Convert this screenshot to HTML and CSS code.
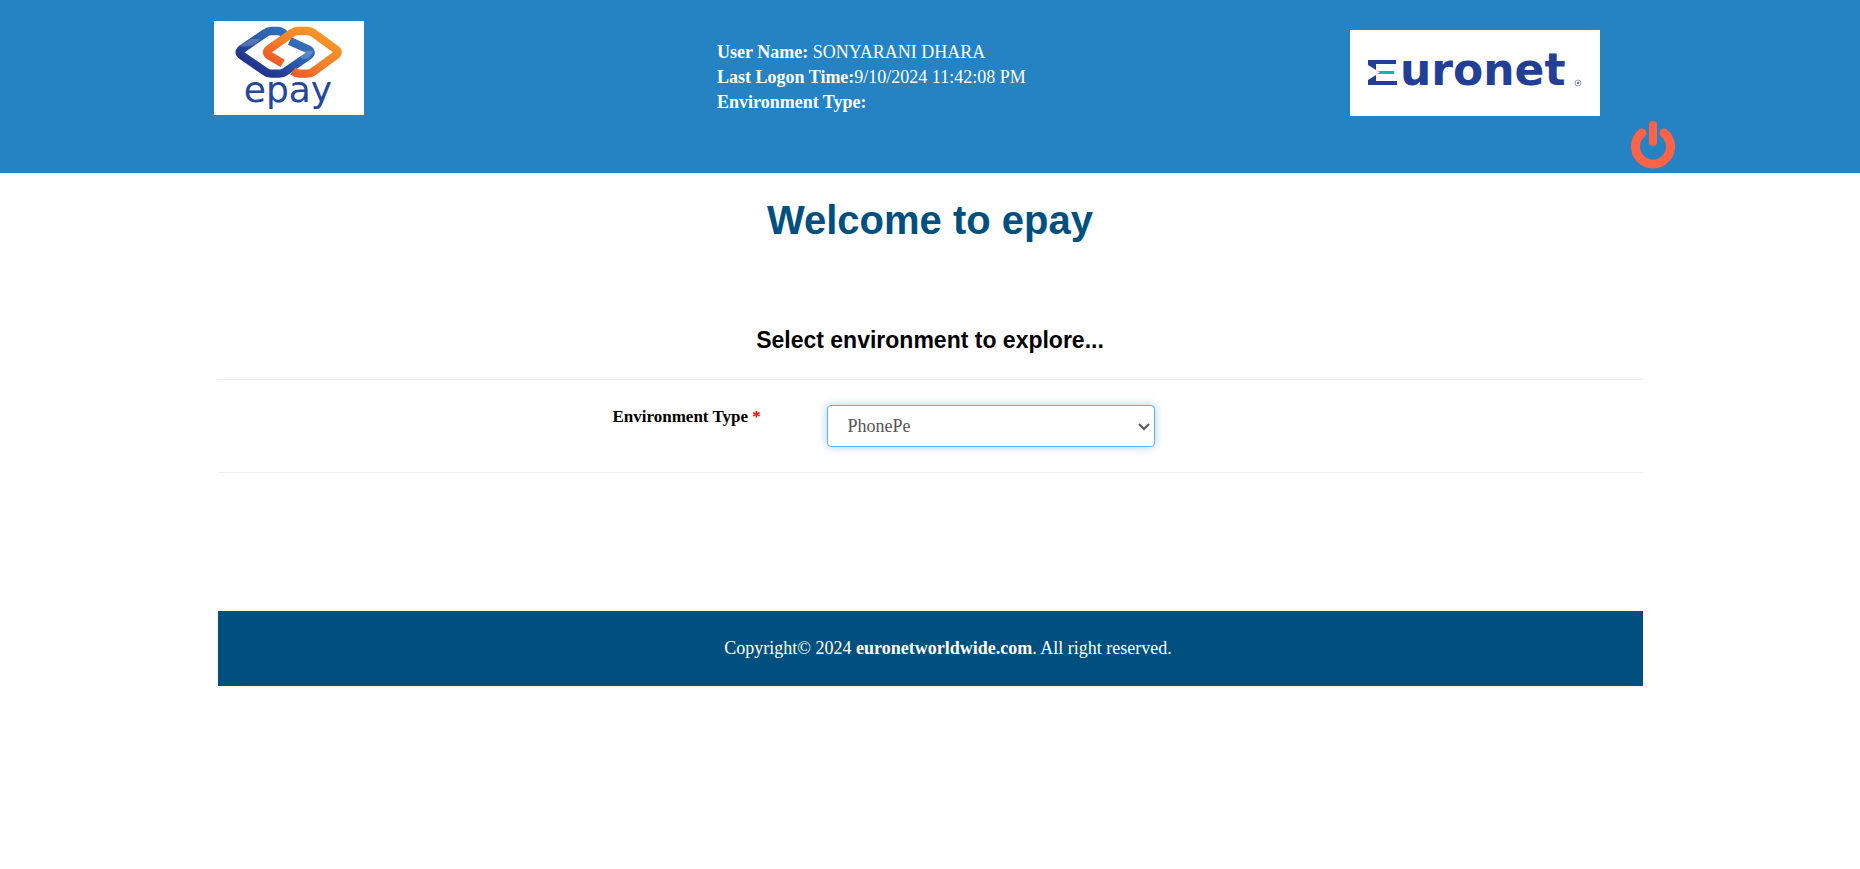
FILE: index.html
```html
<!DOCTYPE html>
<html lang="en">
<head>
<meta charset="utf-8">
<title>epay</title>
<link rel="stylesheet" href="styles.css">
</head>
<body>
<header class="header">
  <div class="brand">
    <svg class="logo-epay" width="150" height="94" viewBox="0 0 450 282" role="img" aria-label="epay">
      <defs>
        <linearGradient id="blue" x1="0" y1="1" x2="1" y2="0">
          <stop offset="0.2" stop-color="#22368f"/><stop offset="0.6" stop-color="#2b62ae"/><stop offset="1" stop-color="#3a7cc4"/>
        </linearGradient>
        <linearGradient id="orange" x1="0" y1="1" x2="1" y2="0">
          <stop offset="0.1" stop-color="#ee5326"/><stop offset="0.5" stop-color="#f4812a"/><stop offset="1" stop-color="#f89c20"/>
        </linearGradient>
      </defs>
      <rect width="450" height="282" fill="#fff"/>
      <g fill="none" stroke-width="25" stroke-linejoin="round">
        <path stroke="url(#blue)" d="M227 60 L280 84 Q298 94 284 104 L214 152 Q206 158 196 158 L172 158 Q162 158 154 152 L84 104 Q70 94 84 84 L154 36 Q162 30 172 30 L192 30 Q202 30 212 40"/>
        <path stroke="url(#orange)" d="M206 127 L166 104 Q152 94 166 84 L234 36 Q242 30 252 30 L280 30 Q290 30 298 36 L364 84 Q378 94 364 104 L298 152 Q290 158 280 158 L256 158 Q246 158 236 150"/>
      </g>
      <path d="M76 76 L110 54 L140 54 Q118 82 76 76Z M256 89 L300 89 L283 113 L262 113Z" fill="#fff" opacity="0.2"/>
      <text class="epay-word" x="222" y="243" text-anchor="middle">epay</text>
    </svg>
  </div>
  <div class="user-info">
    <div><b>User Name:</b> SONYARANI DHARA</div>
    <div><b>Last Logon Time:</b>9/10/2024 11:42:08 PM</div>
    <div><b>Environment Type:</b></div>
  </div>
  <svg class="logo-euronet" width="250" height="86" viewBox="0 0 250 86" role="img" aria-label="Euronet">
    <rect width="250" height="86" fill="#fff"/>
    <path fill="#223f94" d="M18 30 H46 V34 H26 V40 L18 35Z M18 55 V50 L26 45 V51 H47 V55Z"/>
    <path fill="#0bb9ae" d="M27 41 H44 V44 H27 L30 42Z"/>
    <text class="euronet-word" x="50" y="55">uronet</text>
    <circle cx="228" cy="53" r="3" fill="none" stroke="#8d9bc9"/>
    <circle cx="228" cy="53" r="1" fill="#223f94"/>
  </svg>
  <button class="power" type="button" aria-label="Log out">
    <svg width="44" height="50" viewBox="0 0 44 50" fill="none" stroke="#ff6347" stroke-linecap="round">
      <path stroke-width="9" d="M11 13 A17.5 17.5 0 1 0 33 13"/>
      <path stroke-width="8" d="M22 5 V22"/>
    </svg>
  </button>
</header>
<main class="content">
  <h1 class="title">Welcome to epay</h1>
  <h2 class="subtitle">Select environment to explore...</h2>
  <form class="env-form">
    <label class="env-label" for="env">Environment Type <span class="required">*</span></label>
    <div class="select-wrap">
      <select class="env-select" id="env"><option>PhonePe</option></select>
      <svg class="chevron" width="12" height="8" viewBox="0 0 12 8" fill="none" stroke="#555" stroke-width="2"><path d="M1 1 L6 6 L11 1"/></svg>
    </div>
  </form>
  <footer class="footer">Copyright© 2024 <b>euronetworldwide.com</b>. All right reserved.</footer>
</main>
</body>
</html>
```
FILE: styles.css
```css
* { box-sizing: border-box; }
body {
  margin: 0;
  background: #fff;
  color: #000;
  font-family: "Liberation Serif", "Times New Roman", serif;
  font-size: 18px;
}
.header {
  display: grid;
  grid-template-columns: 503fr 633fr auto 44px;
  align-items: start;
  min-height: 173px;
  padding: 21px 185px 0 214px;
  background: #2583c4;
  color: #fff;
}
.logo-epay, .logo-euronet { display: block; }
.epay-word { font: 108px "DejaVu Sans", sans-serif; fill: #24469b; }
.user-info { padding-top: 19px; line-height: 25px; }
.logo-euronet { margin: 9px 31px 0 0; }
.euronet-word { font: bold 44px "DejaVu Sans", sans-serif; fill: #223f94; }
.power {
  margin-top: 99px;
  padding: 0;
  border: 0;
  background: none;
  cursor: pointer;
}
.power svg { display: block; }
.content { width: 1425px; max-width: 100%; margin: 0 auto; }
.title, .subtitle {
  margin: 0;
  font-family: "Liberation Sans", Arial, sans-serif;
  text-align: center;
}
.title { padding-top: 25px; color: #00507f; font-size: 40px; line-height: 44px; }
.subtitle { padding: 84px 0 25px; font-size: 23px; line-height: 28px; }
.env-form {
  display: grid;
  grid-template-columns: 609fr 328fr 488fr;
  align-items: start;
  padding: 25px 0;
  border: solid #eee;
  border-width: 1px 0;
}
.env-label { padding-left: 395px; font-size: 17px; font-weight: bold; line-height: 24px; }
.required { color: red; }
.select-wrap { position: relative; }
.env-select {
  display: block;
  width: 100%;
  height: 42px;
  padding: 0 20px;
  border: 1px solid #66afe9;
  border-radius: 4px;
  outline: 0;
  appearance: none;
  background: #fff;
  box-shadow: 0 0 8px rgba(102, 175, 233, 0.6);
  color: #555;
  font: inherit;
}
.chevron { position: absolute; top: 18px; right: 5px; pointer-events: none; }
.footer {
  margin-top: 138px;
  padding: 25px 0 25px 36px;
  background: #00507f;
  color: #fff;
  line-height: 25px;
  text-align: center;
}
```
